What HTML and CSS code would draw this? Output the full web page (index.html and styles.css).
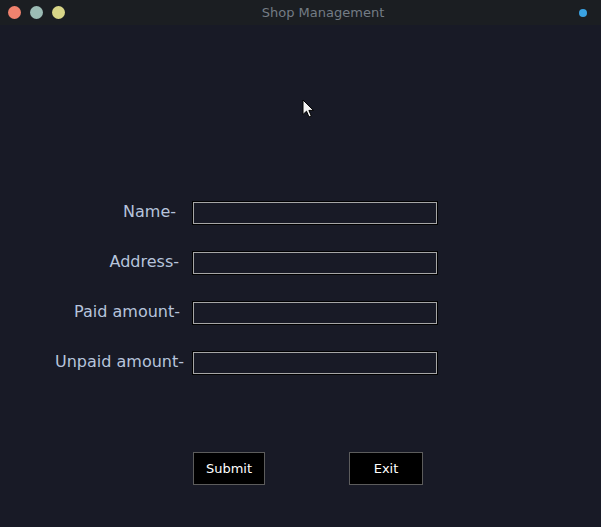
FILE: index.html
```html
<!DOCTYPE html>
<html>
<head>
<meta charset="utf-8">
<title>Shop Management</title>
<link rel="stylesheet" href="styles.css">
</head>
<body>
<div class="window">
  <header class="titlebar">
    <div class="lights">
      <span class="light red"></span>
      <span class="light teal"></span>
      <span class="light yellow"></span>
    </div>
    <div class="title">Shop Management</div>
    <span class="status-dot"></span>
  </header>
  <main class="content">
    <form class="form">
      <div class="row">
        <label class="label l-name">Name-</label>
        <div class="entry"><div class="entry-inner"></div></div>
      </div>
      <div class="row">
        <label class="label l-address">Address-</label>
        <div class="entry"><div class="entry-inner"></div></div>
      </div>
      <div class="row">
        <label class="label l-paid">Paid amount-</label>
        <div class="entry"><div class="entry-inner"></div></div>
      </div>
      <div class="row">
        <label class="label l-unpaid">Unpaid amount-</label>
        <div class="entry"><div class="entry-inner"></div></div>
      </div>
    </form>
    <div class="buttons">
      <div class="btn btn-submit">Submit</div>
      <div class="btn btn-exit">Exit</div>
    </div>
    <svg class="cursor" width="14" height="20" viewBox="0 0 14 20">
      <path d="M1 1 L1 15.5 L4.5 12.2 L7 18 L9.3 17 L6.9 11.4 L11.5 11.4 Z" fill="#f4f4f4" stroke="#000" stroke-width="1" stroke-linejoin="round"/>
    </svg>
  </main>
</div>
</body>
</html>
```
FILE: styles.css
```css
html, body {
  margin: 0;
  padding: 0;
  background: #181a26;
}
.window {
  width: 601px;
  height: 527px;
  overflow: hidden;
  font-family: "DejaVu Sans", sans-serif;
}
.titlebar {
  height: 25px;
  background: #1b1e22;
  display: flex;
  align-items: center;
  position: relative;
}
.lights {
  display: flex;
  gap: 9px;
  padding-left: 8px;
}
.light {
  width: 13px;
  height: 13px;
  border-radius: 50%;
  display: block;
}
.red { background: #f0826e; }
.teal { background: #9cbcb5; }
.yellow { background: #d8d688; }
.title {
  flex: 1;
  text-align: center;
  font-size: 13px;
  color: #747c85;
  padding-left: 2px;
  line-height: 23px;
}
.status-dot {
  width: 8px;
  height: 8px;
  border-radius: 50%;
  background: #3aa2e2;
  margin-right: 14px;
}
.content {
  position: relative;
  height: 502px;
  padding-top: 176px;
  box-sizing: border-box;
}
.form {
  display: flex;
  flex-direction: column;
  gap: 26px;
  margin: 0;
}
.row {
  display: flex;
  align-items: center;
  height: 24px;
}
.label {
  width: 192px;
  box-sizing: border-box;
  text-align: right;
  font-size: 16px;
  color: #b6c4dc;
  line-height: 20px;
  margin-top: -2px;
}
.l-name { padding-right: 16px; }
.l-address { padding-right: 13px; }
.l-paid { padding-right: 12px; }
.l-unpaid { padding-right: 8px; }
.entry {
  width: 246px;
  height: 24px;
  box-sizing: border-box;
  border: 1px solid #000;
}
.entry-inner {
  height: 100%;
  box-sizing: border-box;
  border: 1px solid #a6a6a6;
  background: #181a26;
}
.buttons {
  display: flex;
  gap: 84px;
  padding-left: 193px;
  margin-top: 77px;
}
.btn {
  height: 33px;
  box-sizing: border-box;
  background: #000;
  border: 1px solid #5c5c5c;
  color: #fff;
  font-size: 13px;
  display: flex;
  align-items: center;
  justify-content: center;
}
.btn-submit { width: 72px; }
.btn-exit { width: 74px; }
.cursor {
  position: absolute;
  left: 302px;
  top: 74px;
}
```
